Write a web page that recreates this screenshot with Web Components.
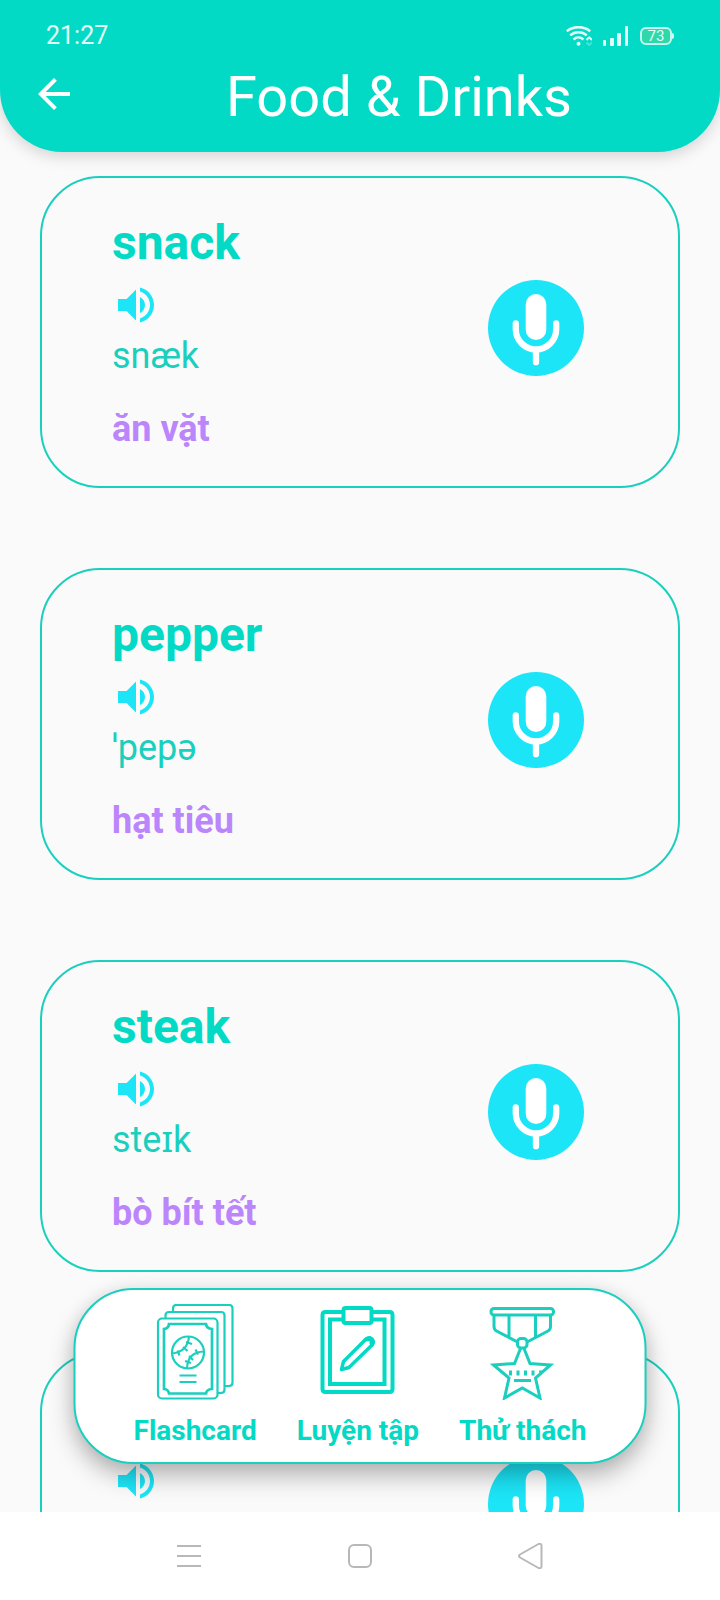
<!DOCTYPE html>
<html lang="vi">
<head>
<meta charset="utf-8">
<meta name="viewport" content="width=device-width, initial-scale=1">
<title>Food &amp; Drinks</title>
<style>
  html, body { margin: 0; height: 100%; }
  body {
    font-family: Roboto, "Noto Sans", sans-serif;
    --teal: #03dac5;
    --line: #1acfbd;
    --cyan: #1ce5f7;
    --violet: #bb86fc;
  }
</style>
</head>
<body>
<vocab-app></vocab-app>

<script>
class BaseElement extends HTMLElement {
  connectedCallback() {
    if (this.shadowRoot) return;
    const t = document.createElement('template');
    t.innerHTML = this.render();
    this.attachShadow({ mode: 'open' }).appendChild(t.content.cloneNode(true));
  }
}

class StatusBar extends BaseElement {
  render() {
    return `<style>
      :host { display: flex; align-items: center; justify-content: space-between; height: 56px; padding: 8px 48px 0 46px; color: #e4fcf9; }
      time { font-size: 25px; line-height: 32px; }
      div { display: flex; align-items: center; gap: 11px; }
      svg { display: block; }
      .battery { box-sizing: border-box; position: relative; width: 32px; height: 18px; border: 2px solid #c4f7f0; border-radius: 6px; background: #2fd8a9; font-size: 15px; line-height: 15px; text-align: center; }
      .battery::after { content: ""; position: absolute; right: -4px; top: 4px; width: 2px; height: 6px; border-radius: 0 2px 2px 0; background: #d0f9f4; }
    </style>
    <time>21:27</time>
    <div>
      <svg width="26" height="20" viewBox="0 0 26 20" fill="none" stroke="currentColor" stroke-width="2.500">
        <path d="M.8 5.2C7.500-.2 17.500-.2 24.200 5.200M4.200 9.400C9 5.200 16 5.200 20.800 9.400M7.500 13.500C10.500 10.700 14.500 10.700 17.500 13.500"/>
        <circle cx="12.500" cy="17.800" r="2" fill="currentColor" stroke="none"/>
        <path stroke-width="2" d="M20.500 14l2.700-2.700L26 14"/>
        <path stroke-width="2" d="M20.500 16.500l2.700 2.500L26 16.500" opacity=".3"/>
      </svg>
      <svg width="26" height="20" viewBox="0 0 26 20" fill="currentColor">
        <rect x="0" y="14" width="3" height="6" rx="1"/><rect x="7" y="12" width="4" height="8" rx="1"/>
        <rect x="14" y="7" width="4" height="13" rx="1"/><rect x="22" y="0" width="3" height="20" rx="1"/>
      </svg>
      <span class="battery">73</span>
    </div>`;
  }
}

class TopicHeader extends BaseElement {
  render() {
    return `<style>
      :host { display: block; position: relative; z-index: 1; flex: none; padding-bottom: 22px; background: var(--teal); color: #fff; border-radius: 0 0 62px 62px; box-shadow: 0 4px 16px rgba(0,0,0,.16); }
      .bar { display: flex; align-items: flex-start; padding-left: 30px; }
      button { flex: none; width: 48px; height: 48px; margin: 6px 0 0; padding: 0; border: 0; background: none; color: inherit; }
      svg { display: block; }
      h1 { flex: 1; margin: 0; font-size: 56px; line-height: 66px; font-weight: 400; text-align: center; }
    </style>
    <status-bar></status-bar>
    <div class="bar">
      <button type="button" aria-label="Back"><svg width="48" height="48" viewBox="0 0 24 24" fill="currentColor"><path d="M20 11H7.830l5.590-5.590L12 4l-8 8 8 8 1.410-1.410L7.830 13H20v-2z"/></svg></button>
      <h1><slot></slot></h1>
    </div>`;
  }
}

class WordCard extends BaseElement {
  render() {
    return `<style>
      :host { display: flex; align-items: center; justify-content: space-between; flex: none; box-sizing: border-box; padding: 36px 94px 36px 70px; border: 2px solid var(--line); border-radius: 60px; color: var(--line); font-size: 36px; line-height: 42px; }
      h2 { min-height: 56px; margin: 0 0 10px; padding-top: 1px; font-size: 48px; line-height: 56px; font-weight: 700; color: var(--teal); }
      button { display: block; padding: 0; border: 0; background: none; color: var(--cyan); }
      .listen { width: 48px; height: 48px; margin: 0 0 6px; }
      .speak { flex: none; width: 96px; height: 96px; margin: 0 0 8px; border-radius: 50%; background: var(--cyan); }
      svg { display: block; }
      p { min-height: 42px; margin: 0; }
      .meaning { margin-top: 31px; font-weight: 700; color: var(--violet); }
    </style>
    <div>
      <h2><slot name="word"></slot></h2>
      <button class="listen" type="button" aria-label="Listen"><svg width="48" height="48" viewBox="0 0 24 24" fill="currentColor"><path d="M3 9v6h4.300L12 19.700V4.300L7.300 9H3zM14 7.970v8.050c1.480-.73 2.500-2.250 2.500-4.020S15.480 8.710 14 7.970zM14 3.230v2.060c2.890.86 5 3.540 5 6.710s-2.110 5.850-5 6.710v2.060c4.010-.91 7-4.490 7-8.770s-2.990-7.860-7-8.770z"/></svg></button>
      <p><slot name="sound"></slot></p>
      <p class="meaning"><slot name="meaning"></slot></p>
    </div>
    <button class="speak" type="button" aria-label="Speak"><svg width="96" height="96" viewBox="0 0 96 96" fill="none" stroke="#fff" stroke-width="6.300" stroke-linecap="round"><rect x="37.700" y="14" width="20.600" height="46" rx="10.300" fill="#fff" stroke="none"/><path d="M27.800 43.300v6a20.200 20.200 0 0 0 40.400 0v-6M48 70v12.200"/></svg></button>`;
  }
}

class DockItem extends BaseElement {
  render() {
    return `<style>
      :host { display: block; }
      a { display: flex; flex-direction: column; align-items: center; gap: 15px; color: var(--teal); font-size: 28px; line-height: 32px; font-weight: 700; text-decoration: none; white-space: nowrap; }
    </style>
    <a href="#"><slot name="icon"></slot><span><slot></slot></span></a>`;
  }
}

class PracticeDock extends BaseElement {
  render() {
    return `<style>
      :host { display: flex; gap: 40px; box-sizing: border-box; padding: 14px 58px 15px; border: 2px solid var(--line); border-radius: 60px; background: #fff; box-shadow: 0 12px 24px rgba(0,0,0,.28), 0 0 16px rgba(0,0,0,.06); }
      svg { display: block; fill: none; stroke: var(--line); }
    </style>
    <dock-item>
      <svg slot="icon" width="96" height="96" viewBox="0 0 96 96" stroke-width="2.200">
        <path d="M25.500 7V4.500Q25.500 1 29 1H81.500Q85 1 85 4.500V78.500Q85 82 81.500 82H77.500"/>
        <path d="M18 14V11.500Q18 8 21.500 8H73.500Q77 8 77 11.500V85.500Q77 89 73.500 89H70"/>
        <rect x="10.500" y="14.500" width="59.500" height="80" rx="4"/>
        <path stroke-width="2.700" d="M21.500 20H58.500Q59 24.500 64.500 25V85Q59 85.500 58.500 89.500H21.500Q21 85.500 16.500 85V25Q21 24.500 21.500 20Z"/>
        <circle cx="40.500" cy="48.500" r="16"/>
        <path d="M41.500 32.500Q40 48 24.500 49.500M56.500 47.500Q40 48 39.500 64.500M38.500 38l6 2M35.500 43l4.500 4M30 46.500l2 5M37.500 57l6 2M41.500 52l4 4M48 45.500l2.500 5"/>
        <path d="M32 71.500H49M32 78H49"/>
      </svg>Flashcard
    </dock-item>
    <dock-item>
      <svg slot="icon" width="96" height="96" viewBox="0 0 96 96" stroke-width="4" style="stroke:var(--teal)">
        <path d="M33 8H16Q13 8 13 11V85Q13 88 16 88H80Q83 88 83 85V11Q83 8 80 8H63"/>
        <path d="M33 15.500H20.500V80H75V15.500H63"/>
        <rect x="34" y="4" width="28" height="15" rx="2"/>
        <path stroke-width="3.500" stroke-linejoin="round" d="M32 65.500L34 57.500L56.500 35Q60 32.500 62.500 35.500Q65 38.500 62 41.500L39.500 63.500Z"/>
        <path fill="var(--teal)" stroke="none" d="M54 35Q60 30 64 34Q67 38 63 43L60 40V37L57 37.500Z"/>
      </svg>Luyện tập
    </dock-item>
    <dock-item>
      <svg slot="icon" width="96" height="96" viewBox="0 0 96 96" stroke-width="3">
        <rect x="16.500" y="4.500" width="62.500" height="6.500" rx="3"/>
        <path d="M19.500 11V22.500Q19.500 25.500 22 27L43 38M76 11V22.500Q76 25.500 73.500 27L52.500 38M34.500 11V33M61 11V33"/>
        <rect x="43" y="34.500" width="9.500" height="9.500" rx="3.500"/>
        <path d="M46 44.500L40 59.500L19 61L34.500 74L30 94L47.800 84L65.500 94L61 74L76 61L55.500 59.500L49.500 44.500"/>
        <path stroke-width="3" d="M36 66.500v5M43.500 66.500v5M51 66.500v5M58.500 66.500v5M66 66.500v2"/>
        <path d="M39.500 76.500H56.500"/>
      </svg>Thử thách
    </dock-item>`;
  }
}

class SystemNav extends BaseElement {
  render() {
    return `<style>
      :host { display: grid; grid-template-columns: repeat(3, 1fr); flex: none; height: 88px; padding: 0 14.4%; background: #fff; }
      button { display: grid; place-items: center; padding: 0; border: 0; background: none; }
      svg { fill: none; stroke: #b8b8b8; stroke-width: 2; }
    </style>
    <button type="button" aria-label="Recent apps"><svg width="26" height="26" viewBox="0 0 26 26"><path d="M1 3H25M1 13H25M1 23H25"/></svg></button>
    <button type="button" aria-label="Home"><svg width="26" height="26" viewBox="0 0 26 26"><rect x="2" y="2" width="22" height="22" rx="5"/></svg></button>
    <button type="button" aria-label="Go back"><svg width="26" height="26" viewBox="0 0 26 26" stroke-linejoin="round"><path d="M2 11.500Q0 13 2 14.500L20.500 25Q23.500 26 23.500 23V3Q23.500 0 20.500 1Z"/></svg></button>`;
  }
}

class VocabApp extends BaseElement {
  render() {
    return `<style>
      :host { display: flex; flex-direction: column; height: 100vh; background: #fafafa; }
      .screen { position: relative; flex: 1; min-height: 0; display: flex; flex-direction: column; overflow: hidden; }
      main { flex: 1; min-height: 0; display: flex; flex-direction: column; gap: 80px; padding: 24px 40px 0; overflow: hidden; }
      practice-dock { position: absolute; z-index: 2; bottom: 48px; left: 50%; transform: translateX(-50%); }
    </style>
    <div class="screen">
      <topic-header>Food &amp; Drinks</topic-header>
      <main>
        <word-card><span slot="word">snack</span><span slot="sound">snæk</span><span slot="meaning">ăn vặt</span></word-card>
        <word-card><span slot="word">pepper</span><span slot="sound">ˈpepə</span><span slot="meaning">hạt tiêu</span></word-card>
        <word-card><span slot="word">steak</span><span slot="sound">steɪk</span><span slot="meaning">bò bít tết</span></word-card>
        <word-card></word-card>
      </main>
      <practice-dock></practice-dock>
    </div>
    <system-nav></system-nav>`;
  }
}

customElements.define('status-bar', StatusBar);
customElements.define('topic-header', TopicHeader);
customElements.define('word-card', WordCard);
customElements.define('dock-item', DockItem);
customElements.define('practice-dock', PracticeDock);
customElements.define('system-nav', SystemNav);
customElements.define('vocab-app', VocabApp);
</script>
</body>
</html>
